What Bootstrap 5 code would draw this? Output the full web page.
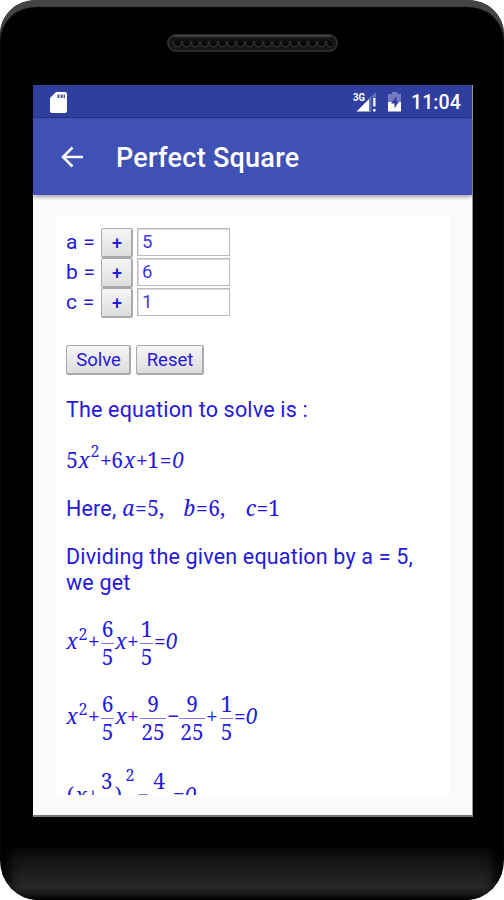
<!DOCTYPE html>
<html lang="en">
<head>
<meta charset="utf-8">
<meta name="viewport" content="width=device-width, initial-scale=1">
<title>Perfect Square</title>
<link href="https://cdn.jsdelivr.net/npm/bootstrap@5.3.0/dist/css/bootstrap.min.css" rel="stylesheet">
<style>
body{background:#fff;font-family:Roboto,sans-serif;overflow:hidden}
.phone{width:504px;height:900px;background:#000;border-radius:36px 36px 38px 38px / 34px 34px 40px 40px;overflow:hidden;padding:0 31px 0 33px;box-shadow:inset 0 7px 1px #444}
.speaker-area{height:85px;padding-top:34px}
.speaker{width:171px;height:18px;margin-left:134px}
.speaker svg{display:block}
.screen{height:732px;background:#fafafa;border-right:1px solid #999;border-bottom:2px solid #777}
.status{height:33px;background:#303f9f;border-bottom:1px solid #283583;padding:0 11px 0 17px}
.battery{margin:0 9px 0 11px}
.clock{font-size:19.5px;font-weight:500;line-height:28px;padding-top:4px;width:50px;letter-spacing:.1px;white-space:nowrap}
.appbar{height:77px;background:#3f51b5;padding-left:28px;box-shadow:0 2px 4px rgba(0,0,0,.35)}
.title{font-size:27px;font-weight:500;line-height:32px;margin:2px 0 0 32px;letter-spacing:.27px}
.sheet{margin:20px 23px 0 23px;height:580px;background:#fff;padding:13px 0 0 10px;overflow:hidden;color:#2418dc}
.coef{height:30px}
.coef label{width:35px;font-size:21px;line-height:28px;white-space:nowrap;letter-spacing:.3px}
.key{border:1px solid #aaa;border-radius:2px;background:linear-gradient(#f6f6f6,#dcdcdc);color:#2418dc;padding:0;box-shadow:inset -1px -1px 0 #aaa;line-height:26px}
.plus{width:32px;height:30px;font-size:18px;font-weight:500}
.field{width:93px;height:28px;border:1px solid #bbb;box-shadow:inset 1px 1px 0 #ddd;border-radius:0;padding:0 4px;margin-left:4px;font-size:18.5px;line-height:27px;color:#4238dc;background:#fff}
.actions{margin-top:27px}
.action{height:30px;font-size:18.5px;margin-right:5px}
.solve{width:65px}.reset{width:68px}
.say{font-size:21.5px;line-height:26px;margin:0;white-space:nowrap;letter-spacing:.18px}
.eq{font-family:"Noto Serif","Droid Serif","Liberation Serif",serif;font-size:21px;line-height:27px}
.eq span,.eq i{text-align:center;flex:none;white-space:nowrap}
.tall>:not(.over){padding-bottom:3px}
.w6{width:6px}.w9{width:9px}.w10{width:10px}.w11{width:11px}.w12{width:12px}.w13{width:13px}
.eq .pow{font-size:16px;width:10px;padding-bottom:18px}
.eq .raised{padding-bottom:40px;width:14px}
.over{width:13px;margin:0 1px 0 3px}
.over b{display:block;font-weight:400}
.over b:first-child{border-bottom:1px solid #8078e6}
.wide{width:26px}
#p1{margin-top:22px}
#e1{margin-top:17px;height:40px}
#e2{margin-top:15px}
#e2m{margin-left:6px}
#vb{margin-left:19px}
#vc{margin-left:20px}
#p2{margin-top:22px}
#e3,#e4{margin-top:19px;height:56px}
#e5{margin-top:21px;height:56px}
#e5>:not(.over):not(.raised){padding-bottom:0}
.chin{height:52px;margin:31px -29px 0 -31px;background:linear-gradient(#0b0b0b,#282828 75%,#181818 90%,#000);box-shadow:inset 12px 0 12px -4px #000,inset -12px 0 12px -4px #000}
</style>
</head>
<body>
<main class="phone">
  <div class="speaker-area">
    <div class="speaker">
      <svg width="171" height="18" viewBox="0 0 171 18">
        <defs><pattern id="mesh" width="9" height="10" patternUnits="userSpaceOnUse" x="6" y="5"><circle cx="4.5" cy="4" r="4" fill="#0a0a0a" stroke="#363636" stroke-width="1"/><path d="M0 0H9V2H0Z" fill="#111"/></pattern></defs>
        <rect x="1" y="1" width="169" height="16" rx="8" fill="#161616" stroke="#2c2c2c" stroke-width="2"/>
        <rect x="6" y="5" width="159" height="10" rx="4" fill="url(#mesh)"/>
        <path d="M7 2H164" stroke="#3c3c3c" stroke-width="2.500"/>
      </svg>
    </div>
  </div>
  <section class="screen d-flex flex-column">
    <div class="status d-flex align-items-center text-white">
      <svg class="mt-1" width="17" height="22" viewBox="0 0 17 22"><path d="M6 0H15Q17 0 17 2V19Q17 21 15 21H2Q0 21 0 19V6Z" fill="#fff"/><path d="M7.500 2.500h2v3.500h-2zM10.700 2.500h2v3.500h-2zM13.600 2.500h1.400v3.500h-1.400z" fill="#4955a6"/></svg>
      <svg class="ms-auto mt-1" width="25" height="22" viewBox="0 0 25 22"><path d="M4.500 19.500L19 5V19.500Z" fill="#fff"/><path d="M17 7L24 0V5.500H19.500V19.500H17Z" fill="#6671bb"/><path d="M21.200 6h2.300v8.500h-2.300zM21.200 17h2.300v2.500h-2.300z" fill="#fff"/><text x="1" y="8.500" font-family="Roboto" font-size="10" font-weight="700" fill="#fff" textLength="12" lengthAdjust="spacingAndGlyphs">3G</text></svg>
      <svg class="mt-1 battery" width="14" height="22" viewBox="0 0 14 22"><path d="M4 0H9.500V2H13V11H0V2H4Z" fill="#737dc0"/><path d="M0 10H13V19.500H0Z" fill="#fff"/><path d="M8.500 4L3 11.500H6.500V16.500L11 9.500H8.500Z" fill="#303f9f"/></svg>
      <span class="clock">11:04</span>
    </div>
    <header class="appbar d-flex align-items-center text-white">
      <svg width="23" height="22" viewBox="0 0 23 22"><path d="M22 11H2M11.500 1.500L2 11L11.500 20.500" fill="none" stroke="#fff" stroke-width="2.500"/></svg>
      <h1 class="title">Perfect Square</h1>
    </header>
    <div class="sheet">
      <div class="coef d-flex"><label for="fa">a =</label><button id="fa" class="key plus">+</button><div class="field">5</div></div>
      <div class="coef d-flex"><label for="fb">b =</label><button id="fb" class="key plus">+</button><div class="field">6</div></div>
      <div class="coef d-flex"><label for="fc">c =</label><button id="fc" class="key plus">+</button><div class="field">1</div></div>
      <div class="actions d-flex"><button class="key action solve">Solve</button><button class="key action reset">Reset</button></div>
      <p class="say" id="p1">The equation to solve is :</p>
      <div class="eq d-flex align-items-center" id="e1"><span class="w12">5</span><i class="w12">x</i><span class="pow">2</span><span class="w11">+</span><span class="w12">6</span><i class="w13">x</i><span class="w11">+</span><span class="w12">1</span><span class="w13">=</span><i class="w12">0</i></div>
      <div class="d-flex align-items-center" id="e2"><p class="say">Here,</p><div class="eq d-flex" id="e2m"><i class="w12">a</i><span class="w13">=</span><span>5,</span><i class="w12" id="vb">b</i><span class="w13">=</span><span>6,</span><i class="w11" id="vc">c</i><span class="w12">=</span><span class="w11">1</span></div></div>
      <p class="say" id="p2"><span>Dividing the given equation by a = 5,</span><br>we get</p>
      <div class="eq tall d-flex align-items-center" id="e3"><i class="w12">x</i><span class="pow">2</span><span class="w10">+</span><span class="over"><b>6</b><b>5</b></span><i class="w12">x</i><span class="w10">+</span><span class="over"><b>1</b><b>5</b></span><span class="w11">=</span><i class="w13">0</i></div>
      <div class="eq tall d-flex align-items-center" id="e4"><i class="w12">x</i><span class="pow">2</span><span class="w10">+</span><span class="over"><b>6</b><b>5</b></span><i class="w12">x</i><span class="w10">+</span><span class="over wide"><b>9</b><b>25</b></span><span class="w9">−</span><span class="over wide"><b>9</b><b>25</b></span><span class="w11">+</span><span class="over"><b>1</b><b>5</b></span><span class="w11">=</span><i class="w13">0</i></div>
      <div class="eq tall d-flex align-items-center" id="e5"><span class="w9">(</span><i class="w12">x</i><span class="w10">+</span><span class="over"><b>3</b><b>5</b></span><span class="w9">)</span><span class="raised pow">2</span><span class="w6">−</span><span class="over wide"><b>4</b><b>25</b></span><span class="w11">=</span><i class="w13">0</i></div>
    </div>
  </section>
  <footer class="chin"></footer>
</main>
<script src="https://cdn.jsdelivr.net/npm/bootstrap@5.3.0/dist/js/bootstrap.bundle.min.js"></script>
</body>
</html>
